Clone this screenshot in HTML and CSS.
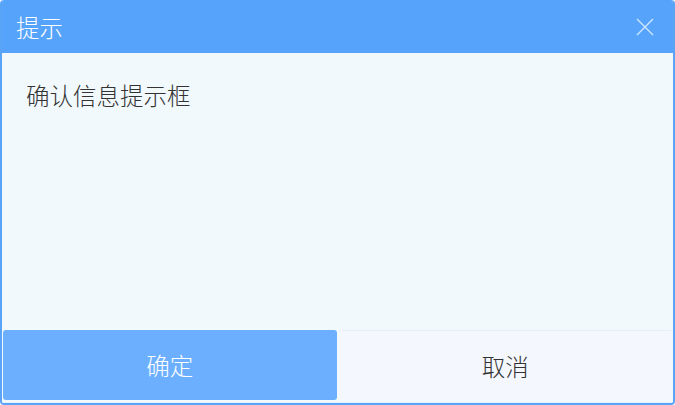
FILE: index.html
```html
<!DOCTYPE html>
<html lang="zh">
<head>
<meta charset="utf-8">
<link rel="stylesheet" href="styles.css">
</head>
<body>
<div class="dialog">
  <div class="header">
    <span class="title">提示</span>
    <svg class="close" width="20" height="20" viewBox="0 0 20 20"><path d="M2 2 L18 18 M18 2 L2 18" stroke="#cfe6ff" stroke-width="1.4" fill="none"/></svg>
  </div>
  <div class="content">确认信息提示框</div>
  <div class="buttons">
    <div class="btn ok">确定</div>
    <div class="btn cancel">取消</div>
  </div>
</div>
</body>
</html>
```
FILE: styles.css
```css
html, body { margin: 0; padding: 0; }
body {
  width: 675px; height: 405px; overflow: hidden;
  font-family: "Noto Sans CJK SC", "Noto Sans", sans-serif;
  font-weight: 300;
  background: #ffffff;
}
.dialog {
  box-sizing: border-box;
  width: 675px; height: 405px;
  border: 2px solid #5aa4f8;
  border-top: none;
  border-radius: 4px;
  background: #f2f9fc;
  display: flex; flex-direction: column;
  overflow: hidden;
}
.header {
  height: 53px;
  margin: 0 -2px;
  background: #56a3fb;
  display: flex; align-items: center; justify-content: space-between;
  padding: 0 20px 0 16px;
  flex-shrink: 0;
}
.title { color: #ffffff; font-size: 23.5px; line-height: 1; margin-top: 2px; }
.close { display: block; }
.content {
  flex: 1;
  padding: 26px 0 0 24px;
  font-size: 23.5px; color: #333333; line-height: 32px;
}
.buttons {
  display: flex; gap: 2px;
  height: 70px;
  padding: 0 1px 2px 1px;
  background: #f2f9fc;
  border-bottom: 1px solid #e2f4fb;
}
.btn {
  flex: 1;
  display: flex; align-items: center; justify-content: center;
  font-size: 23.5px;
  border-radius: 3px;
}
.ok { background: #6cafff; color: #ffffff; }
.cancel { background: #f4f8fe; color: #333333; border-top: 1px solid #e8eef4; }
```
